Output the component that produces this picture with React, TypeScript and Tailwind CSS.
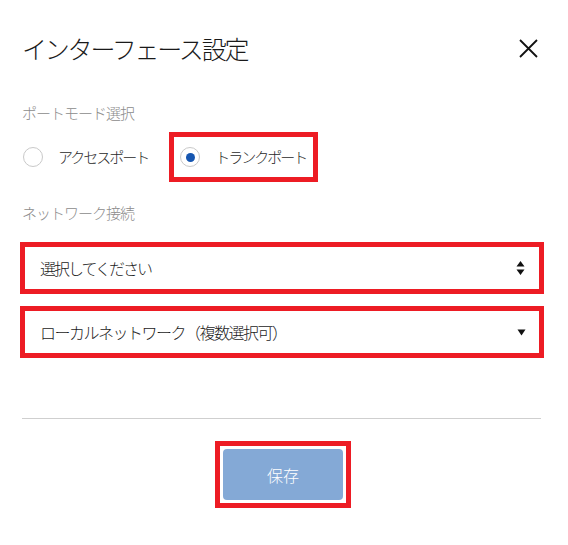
const font = { fontFamily: '"Noto Sans CJK JP", "Noto Sans", sans-serif' }

function Radio({ checked }: { checked?: boolean }) {
  return (
    <span className="flex h-[20px] w-[20px] shrink-0 items-center justify-center rounded-full border border-[#c9c9c9] bg-white">
      {checked && <span className="h-[9px] w-[9px] rounded-full bg-[#1656b0]" />}
    </span>
  )
}

export default function App() {
  return (
    <div className="h-[545px] w-[568px] overflow-hidden bg-white font-light" style={font}>
      <div className="px-[20px] pt-[30px]">
        {/* ヘッダー */}
        <div className="flex h-[36px] items-center justify-between">
          <h1 className="pl-[2px] text-[25px] leading-[36px] tracking-[-2.2px] text-[#1a1a1a]">インターフェース設定</h1>
          <svg width="19" height="19" viewBox="0 0 19 19" className="mr-[10px]">
            <path d="M1 1 L18 18 M18 1 L1 18" stroke="#111" strokeWidth="1.8" />
          </svg>
        </div>

        {/* ポートモード */}
        <div className="mt-[37px] pl-[2px] text-[15px] leading-[20px] tracking-[-1px] text-[#8c8c8c]">ポートモード選択</div>
        <div className="mt-[9px] flex items-center">
          <label className="flex items-center gap-[15px] pl-[3px]">
            <Radio />
            <span className="text-[15px] tracking-[-2px] text-[#2a2a2a]">アクセスポート</span>
          </label>
          <label className="ml-[21px] flex h-[50px] items-center gap-[15px] border-[5px] border-[#ed1c24] pl-[6px] pr-[7px]">
            <Radio checked />
            <span className="text-[15px] tracking-[-2px] text-[#2a2a2a]">トランクポート</span>
          </label>
        </div>

        {/* ネットワーク接続 */}
        <div className="mt-[21px] pl-[2px] text-[15px] leading-[20px] tracking-[-1px] text-[#8c8c8c]">ネットワーク接続</div>
        <div className="mt-[19px] flex h-[52px] w-[524px] items-center justify-between border-[5px] border-[#ed1c24] pl-[15px] pr-[14px]">
          <span className="text-[16px] tracking-[-2px] text-[#1a1a1a]">選択してください</span>
          <svg width="9" height="16" viewBox="0 0 9 16">
            <path d="M4.5 1 L8.5 6.5 H0.5 Z M0.5 9.5 H8.5 L4.5 15 Z" fill="#111" />
          </svg>
        </div>
        <div className="mt-[12px] flex h-[52px] w-[524px] items-center justify-between border-[5px] border-[#ed1c24] pl-[15px] pr-[13px]">
          <span className="text-[16px] tracking-[-1.5px] text-[#1a1a1a]">ローカルネットワーク（複数選択可）</span>
          <svg width="9" height="7" viewBox="0 0 9 7">
            <path d="M0.5 0.5 H8.5 L4.5 6.5 Z" fill="#111" />
          </svg>
        </div>

        {/* フッター */}
        <div className="ml-[2px] mt-[60px] w-[519px] border-t border-[#cfcfcf]" />
        <div className="mt-[22px] flex justify-center pr-[2px]">
          <div className="border-[5px] border-[#ed1c24] p-[3px]">
            <button className="h-[51px] w-[120px] rounded-[4px] bg-[#84a9d6] text-[16px] text-white">保存</button>
          </div>
        </div>
      </div>
    </div>
  )
}
